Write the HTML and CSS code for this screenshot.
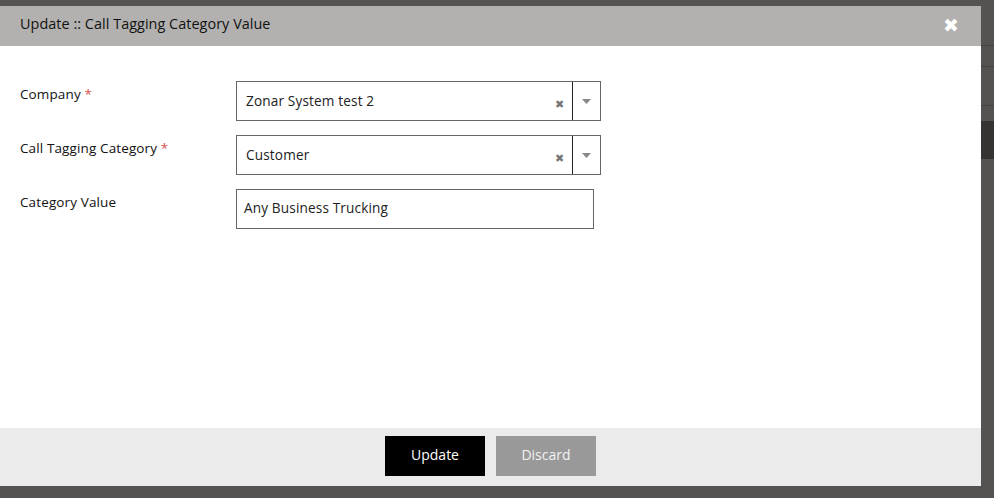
FILE: index.html
```html
<!DOCTYPE html>
<html>
<head>
<meta charset="utf-8">
<link rel="stylesheet" href="styles.css">
</head>
<body>
<div class="backdrop">
  <div class="bg-lines">
    <div class="bl l1"></div>
    <div class="bl l2"></div>
    <div class="bl l3"></div>
    <div class="bl dark"></div>
  </div>
  <div class="modal">
    <div class="modal-header">
      <span class="title">Update :: Call Tagging Category Value</span>
      <span class="close">&#x2716;</span>
    </div>
    <div class="modal-body">
      <div class="row">
        <label class="lbl">Company <span class="req">*</span></label>
        <div class="select">
          <span class="val">Zonar System test 2</span>
          <span class="clear">&#x2716;</span>
          <span class="arrow"><svg width="9" height="5" viewBox="0 0 9 5"><path d="M0 0H9L4.5 5Z" fill="#888"/></svg></span>
        </div>
      </div>
      <div class="row">
        <label class="lbl">Call Tagging Category <span class="req">*</span></label>
        <div class="select">
          <span class="val">Customer</span>
          <span class="clear">&#x2716;</span>
          <span class="arrow"><svg width="9" height="5" viewBox="0 0 9 5"><path d="M0 0H9L4.5 5Z" fill="#888"/></svg></span>
        </div>
      </div>
      <div class="row">
        <label class="lbl">Category Value</label>
        <div class="input">Any Business Trucking</div>
      </div>
    </div>
    <div class="modal-footer">
      <button class="btn btn-primary">Update</button>
      <button class="btn btn-secondary">Discard</button>
    </div>
  </div>
</div>
</body>
</html>
```

FILE: styles.css
```css
* { box-sizing: border-box; }
html, body { margin: 0; padding: 0; }
body {
  width: 994px;
  height: 498px;
  overflow: hidden;
  background: #545351;
  font-family: "Open Sans", "Liberation Sans", sans-serif;
  color: #1d1d1d;
}
.backdrop {
  position: relative;
  width: 994px;
  height: 498px;
  padding-top: 6px;
  background: #545351;
}
.bg-lines {
  position: absolute;
  left: 981px;
  top: 0;
  width: 13px;
  height: 498px;
}
.bl { position: absolute; left: 0; right: 0; }
.l1 { top: 45px; height: 1px; background: #444; }
.l2 { top: 66px; height: 1px; background: #444; }
.l3 { top: 105px; height: 1px; background: #444; }
.dark { top: 121px; height: 38px; background: #353432; }
.modal {
  width: 981px;
  height: 480px;
  background: #fff;
  display: flex;
  flex-direction: column;
}
.modal-header {
  height: 40px;
  background: #b2b1af;
  display: flex;
  align-items: center;
  justify-content: space-between;
  padding: 0 22px 5px 20px;
}
.title {
  font-size: 14.4px;
  color: #111;
  letter-spacing: 0.05px;
}
.close {
  color: #fff;
  font-size: 19px;
  line-height: 1;
  padding-top: 4px;
}
.modal-body {
  flex: 1;
  padding: 35px 20px 0 20px;
}
.row {
  display: flex;
  height: 40px;
  margin-bottom: 14px;
}
.lbl {
  width: 216px;
  font-size: 13.5px;
  letter-spacing: 0.12px;
  padding-top: 4px;
  color: #111;
}
.req { color: #d9534f; }
.select {
  width: 365px;
  height: 40px;
  border: 1px solid #666;
  display: flex;
  align-items: center;
}
.val {
  flex: 1;
  font-size: 13.6px;
  letter-spacing: 0.15px;
  padding-left: 9px;
  padding-bottom: 2px;
  color: #222;
}
.clear {
  color: #777;
  font-size: 11px;
  width: 17px;
  padding-top: 4px;
}
.arrow {
  width: 28px;
  height: 38px;
  border-left: 1px solid #222;
  display: flex;
  align-items: center;
  justify-content: center;
  padding-top: 1px;
}
.input {
  width: 358px;
  height: 40px;
  border: 1px solid #666;
  font-size: 13.6px;
  letter-spacing: 0.15px;
  padding: 8px 7px;
  color: #222;
}
.modal-footer {
  height: 58px;
  background: #ebebeb;
  display: flex;
  justify-content: center;
  align-items: center;
  gap: 11px;
  padding-bottom: 2px;
}
.btn {
  width: 100px;
  height: 40px;
  border: none;
  font-family: inherit;
  font-size: 14px;
  color: #fff;
  padding-bottom: 5px;
}
.btn-primary { background: #000; }
.btn-secondary { background: #999; color: #f2f2f2; }
```
